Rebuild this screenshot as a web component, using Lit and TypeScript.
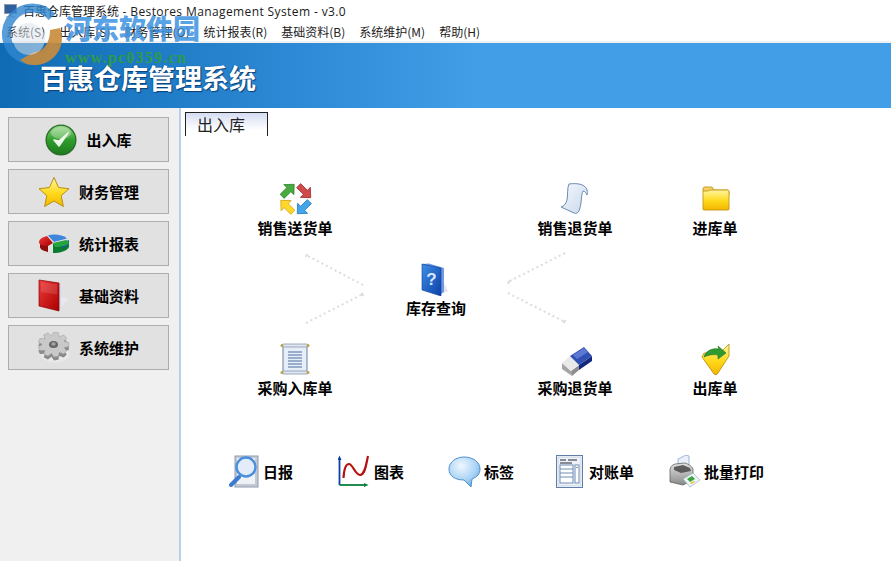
import { LitElement, html, css, svg } from "lit";
import { customElement } from "lit/decorators.js";

const defs = svg`<defs>
<linearGradient id="gGreen" x1="0" y1="0" x2="0" y2="1"><stop offset="0" stop-color="#8fd67f"/><stop offset=".5" stop-color="#2f9e2c"/><stop offset="1" stop-color="#1f7a1f"/></linearGradient>
<linearGradient id="gYellow" x1="0" y1="0" x2="0" y2="1"><stop offset="0" stop-color="#fff6a0"/><stop offset=".55" stop-color="#ffd91a"/><stop offset="1" stop-color="#f2b600"/></linearGradient>
<linearGradient id="gRed" x1="0" y1="0" x2="1" y2="1"><stop offset="0" stop-color="#f03a3a"/><stop offset="1" stop-color="#a80000"/></linearGradient>
<linearGradient id="gBlue" x1="0" y1="0" x2="1" y2="1"><stop offset="0" stop-color="#3f8fe6"/><stop offset="1" stop-color="#0b3fa8"/></linearGradient>
<linearGradient id="gGray" x1="0" y1="0" x2="0" y2="1"><stop offset="0" stop-color="#e2e2e2"/><stop offset="1" stop-color="#8a8a8a"/></linearGradient>
<linearGradient id="gPaper" x1="0" y1="0" x2="1" y2="1"><stop offset="0" stop-color="#f4f8fd"/><stop offset="1" stop-color="#c9d8ec"/></linearGradient>
<radialGradient id="gBubble" cx=".4" cy=".3" r=".8"><stop offset="0" stop-color="#eef7ff"/><stop offset=".6" stop-color="#a9d3f5"/><stop offset="1" stop-color="#5d9fd8"/></radialGradient>
</defs>`;

const ARROW = "0,-10 7.500,-2 3,-2 3,8 -3,8 -3,-2 -7.500,-2";
const arrow = (x: number, y: number, r: number, fill: string, edge: string) =>
  svg`<polygon points=${ARROW} transform="translate(${x} ${y}) rotate(${r}) scale(.95)" fill=${fill} stroke=${edge} stroke-width=".7" stroke-linejoin="round"/>`;

function gearPath(cx: number, cy: number, ro: number, ri: number, sy: number, teeth: number) {
  const pts: string[] = [];
  for (let i = 0; i < teeth; i++) {
    const a = (i / teeth) * Math.PI * 2;
    const w = Math.PI / teeth;
    const seq: [number, number][] = [[a - w * 0.95, ri], [a - w * 0.45, ro], [a + w * 0.45, ro], [a + w * 0.95, ri]];
    for (const [t, r] of seq) pts.push(`${(cx + r * Math.cos(t)).toFixed(1)},${(cy + r * Math.sin(t) * sy).toFixed(1)}`);
  }
  return pts.join(" ");
}

const icons: Record<string, any> = {
  check: svg`<svg width="32" height="32" viewBox="0 0 32 32"><circle cx="16" cy="16" r="15.500" fill="#2a6b2a"/><circle cx="16" cy="16" r="14.200" fill="url(#gGreen)"/><ellipse cx="16" cy="9" rx="10" ry="6" fill="#fff" opacity=".3"/><path d="M9 16l5 6 9-13-9 8z" fill="#eef6ea" stroke="#eef6ea" stroke-width="1.600" stroke-linejoin="round"/></svg>`,
  star: svg`<svg width="32" height="32" viewBox="0 0 32 32"><path d="M16 1.500l4.600 10 10.400 1.200-7.800 7 2.200 10.800L16 25l-9.400 5.500 2.200-10.800-7.800-7 10.400-1.200z" fill="url(#gYellow)" stroke="#b98f10" stroke-width="1" stroke-linejoin="round"/></svg>`,
  pie: svg`<svg width="32" height="22" viewBox="0 0 32 22"><path d="M2 9v5c0 2 3 4 8 5V13z" fill="#8e0d0d"/><path d="M15 11v9c7 0 14-2 16-6V8z" fill="#0c7a2e"/><path d="M24 15c3-1 6-2 7-5V7l-7 3z" fill="#0f55b5"/><path d="M1 9c0-3 4-5 8-6l6 7-5 3C5 13 1 12 1 9z" fill="url(#gRed)"/><path d="M15 10l13-3c2 1 3 2 3 3-1 2-7 4-14 4z" fill="#23a53d"/><path d="M10 2.500C15 1 24 1 29 5.500L16 9z" fill="#3f86dd"/></svg>`,
  redbook: svg`<svg width="32" height="33" viewBox="0 0 32 33"><path d="M23 18l7 2-7 9z" fill="#e8e8ee"/><path d="M20 3l3 2v24l-3 2z" fill="#cfd8f0"/><path d="M1 1l20 3v28L1 27z" fill="url(#gRed)" stroke="#8a0000" stroke-width=".7"/><path d="M3 3l16 2.500v10L3 13z" fill="#fff" opacity=".12"/></svg>`,
  gear: svg`<svg width="32" height="31" viewBox="0 0 32 31"><ellipse cx="17" cy="22" rx="14.500" ry="8.500" fill="#eaeaea"/><polygon points=${gearPath(15.5, 16, 15.5, 11.5, 0.8, 9)} fill="#8b8b8b"/><polygon points=${gearPath(15.5, 12.5, 15.5, 11.5, 0.8, 9)} fill="#c9c9c9" stroke="#9a9a9a" stroke-width=".5"/><ellipse cx="15.500" cy="12.500" rx="4.500" ry="3.600" fill="#666"/><ellipse cx="15.500" cy="12" rx="2.200" ry="1.800" fill="#a5a5a5"/></svg>`,
  arrows: svg`<svg width="33" height="32" viewBox="0 0 33 32">
    ${arrow(8.5, 8, 45, "#49ab3f", "#1f7a1f")}
    ${arrow(25, 8, 135, "#cf4a4a", "#8e2020")}
    ${arrow(25, 24, 225, "#43a5ea", "#1a6bb0")}
    ${arrow(8.5, 24, 315, "#ffd82e", "#c79600")}</svg>`,
  scroll: svg`<svg width="32" height="32" viewBox="0 0 32 32"><path d="M10 1c6-1 13 0 15 2 3 2 4 6 3 9-1-2-2-4-4-4-2 3-1 12-4 20-1 2-3 3-5 2L2 24c3-1 5-3 6-7 1-5 0-12 2-16z" fill="url(#gPaper)" stroke="#6d8bb4" stroke-width="1"/></svg>`,
  folder: svg`<svg width="28" height="25" viewBox="0 0 28 25"><path d="M1 5V2.500C1 1.500 2 1 3 1h7l2 3h13c1 0 2 1 2 2v3z" fill="#f4d264" stroke="#c18a00" stroke-width=".8"/><path d="M1 5h5l2-1h18c.6 0 1 .5 1 1v18c0 .6-.4 1-1 1H2c-.6 0-1-.4-1-1z" fill="url(#gYellow)" stroke="#c18a00" stroke-width=".8"/></svg>`,
  help: svg`<svg width="27" height="33" viewBox="0 0 27 33"><path d="M23 20l4 8-4 2z" fill="#e4e6ec"/><path d="M1 1l7-.5L23 5v24l-3 2z" fill="#6f9ae0"/><path d="M1 1l19 4v28L1 27z" fill="url(#gBlue)" stroke="#0a3a9a" stroke-width=".6"/><text x="10.500" y="22" font-size="17" font-weight="700" font-family="Liberation Sans" fill="#d9e8ff" text-anchor="middle">?</text></svg>`,
  doc: svg`<svg width="30" height="33" viewBox="0 0 30 33"><rect x="3" y="3" width="24" height="27" fill="#e6eef9" stroke="#6d7f99"/><rect x="2" y="1" width="26" height="3" rx="1.500" fill="#dfe7f2" stroke="#8796ad" stroke-width=".8"/><rect x="2" y="28" width="26" height="3" rx="1.500" fill="#dfe7f2" stroke="#8796ad" stroke-width=".8"/><circle cx="2" cy="2.500" r="1.500" fill="#b8a24a"/><circle cx="28" cy="2.500" r="1.500" fill="#b8a24a"/><circle cx="2" cy="29.500" r="1.500" fill="#b8a24a"/><circle cx="28" cy="29.500" r="1.500" fill="#b8a24a"/><path d="M8 9h14M8 12h14M8 15h14M8 18h14M8 21h14M8 24h14" stroke="#4f6f9c" stroke-width="1"/></svg>`,
  eraser: svg`<svg width="32" height="30" viewBox="0 0 32 30"><path d="M1 17l9 8 1 5-10-7z" fill="#a5a5a5"/><path d="M10 25l8-6v5l-7 6z" fill="#8d8d8d"/><path d="M1 17l8-7 9 9-8 6z" fill="#e9e9e9"/><path d="M18 19l13-9v5l-13 9z" fill="#14277a"/><path d="M9 10L23 1l8 9-13 9z" fill="#3150b4"/><path d="M12 9l11-7 4 4-11 7z" fill="#5c79d2"/></svg>`,
  folderOut: svg`<svg width="30" height="32" viewBox="0 0 30 32"><path d="M2 14l12 17c1 1 3 1 4-1L29 13V1l-9 9H4z" fill="url(#gYellow)" stroke="#b88900" stroke-width=".8"/><path d="M4 14c2-7 9-9 15-8l-1-3 8 7-8 6 0-4c-5-1-10 0-14 2z" fill="#2f9a2f" stroke="#1c6d1c" stroke-width=".6"/></svg>`,
  report: svg`<svg width="31" height="33" viewBox="0 0 31 33"><rect x="6" y="1" width="23" height="31" fill="#c5cad2" stroke="#8e9cb0"/><rect x="8" y="3" width="18" height="26" fill="#eef1f5"/><path d="M10 22l-8 8" stroke="#3c7cd0" stroke-width="4" stroke-linecap="round"/><circle cx="17" cy="12" r="9.500" fill="#dceafa" fill-opacity=".6" stroke="#4a8fdc" stroke-width="2.400"/></svg>`,
  chart: svg`<svg width="31" height="33" viewBox="0 0 31 33"><path d="M1.500 3v27" stroke="#0b3fa8" stroke-width="1.800"/><path d="M-.5 5l2-4.500L3.500 5z" fill="#0b3fa8"/><path d="M1.500 30h26" stroke="#0a7f3a" stroke-width="1.800"/><path d="M26 28l4.500 2-4.500 2z" fill="#0a7f3a"/><path d="M5.500 23C6 14 8 9 11 9c4 0 6 11 11 11 5 0 6-10 8-19" fill="none" stroke="#b51212" stroke-width="2.200"/></svg>`,
  bubble: svg`<svg width="33" height="32" viewBox="0 0 33 32"><path d="M16 1c9 0 16 5 16 12 0 5-3 8-8 10l-1 8-7-7C7 24 1 20 1 13 1 6 8 1 16 1z" fill="url(#gBubble)" stroke="#4e90cc" stroke-width="1"/></svg>`,
  ledger: svg`<svg width="27" height="33" viewBox="0 0 27 33"><rect x=".5" y=".5" width="26" height="32" fill="#fff" stroke="#5f7ea8"/><rect x="2" y="2" width="23" height="29" fill="#eef2f8" stroke="#a9bbd3" stroke-width=".6"/><path d="M4 5h6M12 5h9M4 8h12" stroke="#223" stroke-width="1"/><rect x="4" y="10" width="13" height="18" fill="#fff" stroke="#6f8db6"/><path d="M4 14h13M4 18h13M4 22h13" stroke="#6f8db6"/><rect x="19" y="10" width="4" height="18" fill="#fff" stroke="#6f8db6"/><path d="M21 12v1" stroke="#222"/></svg>`,
  printer: svg`<svg width="31" height="33" viewBox="0 0 31 33"><path d="M9 12V4l8-4 3 1v9z" fill="#e9f0fb" stroke="#7d9bc4" stroke-width=".7"/><path d="M1 15c0-3 2-5 5-6l10-1c3 1 7 3 8 6v11l-10 5-13-3z" fill="url(#gGray)" stroke="#555" stroke-width=".7"/><path d="M5 12l9-2 7 3 1 3-10 2-7-3z" fill="#5c5c5c"/><path d="M14 24l10-6 7 7-10 7z" fill="#eef3fb" stroke="#8aa" stroke-width=".6"/><path d="M18 24l5-3 3 3-5 3z" fill="#3aa63a"/><path d="M21 28l4-2 1 1-4 2z" fill="#e4c21f"/></svg>`,
};

const side = [["check", "出入库"], ["star", "财务管理"], ["pie", "统计报表"], ["redbook", "基础资料"], ["gear", "系统维护"]];
const menus = ["系统(S)", "出入库(S)", "财务管理(O)", "统计报表(R)", "基础资料(B)", "系统维护(M)", "帮助(H)"];
// Diagram nodes on the free canvas: centre x, icon top y, label centre y (canvas coordinates)
const nodes: [string, string, number, number, number][] = [
  ["arrows", "销售送货单", 114, 75, 120],
  ["scroll", "销售退货单", 394, 75, 120],
  ["folder", "进库单", 535, 78, 120],
  ["help", "库存查询", 253, 155, 200],
  ["doc", "采购入库单", 114, 235, 280],
  ["eraser", "采购退货单", 396, 238, 280],
  ["folderOut", "出库单", 534, 235, 280],
];
const tools: [string, string, number, number][] = [
  ["report", "日报", 48, 3],
  ["chart", "图表", 157, 5],
  ["bubble", "标签", 267, 3],
  ["ledger", "对账单", 375, 6],
  ["printer", "批量打印", 488, 4],
];

@customElement("app-root")
export class AppRoot extends LitElement {
  static styles = css`
    :host { display: block; width: 891px; height: 561px; position: relative; overflow: hidden; background: #fff;
      font-family: "Noto Sans CJK SC", "Liberation Sans", sans-serif; color: #000; }
    .title { height: 21px; display: flex; align-items: center; gap: 6px; padding-left: 4px; font-size: 12px; color: #1a1a1a;
      font-family: "Open Sans", "Noto Sans CJK SC", sans-serif; letter-spacing: .39px; white-space: nowrap; }
    .title .cn { font-family: "Noto Sans CJK SC", sans-serif; letter-spacing: 0; }
    .menu { height: 20px; display: flex; align-items: center; gap: 14px; padding-left: 6px; font-size: 12px; color: #222; white-space: nowrap; }
    .strip { height: 2px; background: #f0f0f0; }
    .banner { height: 65px; display: flex; align-items: center; padding-left: 40px; box-sizing: border-box;
      background: linear-gradient(90deg, #0f6cb4 0, #2e8ad6 300px, #429ee6 480px, #429ee6 100%); }
    .banner span { color: #fff; font-size: 27px; font-weight: 700; line-height: 1; padding-top: 4px;
      text-shadow: 1px 1px 1px #0a3f78, -1px 0 1px rgba(10,63,120,.5); }
    .body { height: 453px; display: flex; }
    .side { width: 179px; background: #f0f0f0; padding: 9px 0 0 8px; box-sizing: border-box; display: flex; flex-direction: column; gap: 7px; }
    .btn { width: 161px; height: 45px; box-sizing: border-box; border: 1px solid #adadad; background: #e1e1e1;
      display: flex; align-items: center; justify-content: center; gap: 9px; font-size: 15px; font-weight: 700; }
    .divider { width: 2px; background: #b9cfea; }
    .main { flex: 1; position: relative; background: #fff; }
    .tab { position: absolute; left: 4px; top: 4px; width: 83px; height: 24px; box-sizing: border-box;
      border: 1px solid #222; border-bottom: none; padding-left: 11px; font-size: 16px; line-height: 23px; color: #222;
      background: linear-gradient(#d5ddf3 0, #fff 75%); }
    .lines { position: absolute; left: 0; top: 0; }
    .node { position: absolute; width: 120px; margin-left: -60px; display: flex; justify-content: center; }
    .label { position: absolute; width: 120px; margin-left: -60px; text-align: center; font-size: 15px; font-weight: 700; line-height: 20px; }
    .tool { position: absolute; top: 347px; height: 33px; display: flex; align-items: center; font-size: 15px; font-weight: 700; white-space: nowrap; }
    svg { display: block; flex: none; }
    .mark { position: absolute; left: 0; top: 0; pointer-events: none; }
    .wm1 { position: absolute; left: 65px; top: 10px; font-size: 27px; line-height: 36px; font-weight: 900; color: #3d92e0; opacity: .85; white-space: nowrap; }
    .wm2 { position: absolute; left: 65px; top: 49px; font-family: "Liberation Serif", serif; font-size: 16px; line-height: 18px; font-weight: 700; color: #2f9a4a; letter-spacing: 1.250px; white-space: nowrap; }
  `;

  render() {
    return html`
      <svg width="0" height="0" style="position:absolute">${defs}</svg>
      <div class="title">
        <svg width="13" height="14" viewBox="0 0 13 14"><rect x=".5" y=".5" width="12" height="9" fill="#2f5f9c" stroke="#8a98aa"/><path d="M5 10h3v2H5z" fill="#9aa"/><path d="M2 12h9v1.500H2z" fill="#c2c8d0"/></svg>
        <span><span class="cn">百惠仓库管理系统</span> - Bestores Management System - v3.0</span>
      </div>
      <div class="menu">${menus.map((m) => html`<span>${m}</span>`)}</div>
      <div class="strip"></div>
      <div class="banner"><span>百惠仓库管理系统</span></div>
      <div class="body">
        <div class="side">
          ${side.map(([i, t]) => html`<div class="btn">${icons[i]}<span>${t}</span></div>`)}
        </div>
        <div class="divider"></div>
        <div class="main">
          <div class="tab">出入库</div>
          <svg class="lines" width="710" height="453" viewBox="0 0 710 453" fill="none" stroke="#dcdcdc" stroke-width="2" stroke-dasharray="2 3">
            <path d="M182 177l-57-30M125 147l1 5M125 147l5-1"/>
            <path d="M125 215l57-29M182 186l-1 5M182 186l-5-1"/>
            <path d="M384 145l-57 29M327 174l2 5M327 174l5-2"/>
            <path d="M327 185l57 29M384 214l-5 1M384 214l0-5"/>
          </svg>
          ${nodes.map(([i, t, x, y, ly]) => html`
            <div class="node" style="left:${x}px;top:${y}px">${icons[i]}</div>
            <div class="label" style="left:${i === "folder" ? x - 1 : i === "help" ? x + 2 : i === "eraser" ? x - 2 : x}px;top:${ly - 10}px">${t}</div>`)}
          ${tools.map(([i, t, x, g]) => html`<div class="tool" style="left:${x}px;gap:${g}px">${icons[i]}<span>${t}</span></div>`)}
        </div>
      </div>
      <svg class="mark" width="70" height="70" viewBox="0 0 70 70" fill="none">
        <path d="M52 17A26 26 0 1 0 56 45" stroke="#2f86d0" stroke-width="9" opacity=".8"/>
        <path d="M60 28A27 27 0 0 1 34 65C28 65 24 63 20 60L34 52C44 52 50 42 50 30z" fill="#c98a3a" opacity=".9"/>
        <circle cx="29" cy="39" r="16" fill="#dfe6ee" opacity=".55"/>
      </svg>
      <div class="wm1">河东软件园</div>
      <div class="wm2">www.pc0359.cn</div>
    `;
  }
}
